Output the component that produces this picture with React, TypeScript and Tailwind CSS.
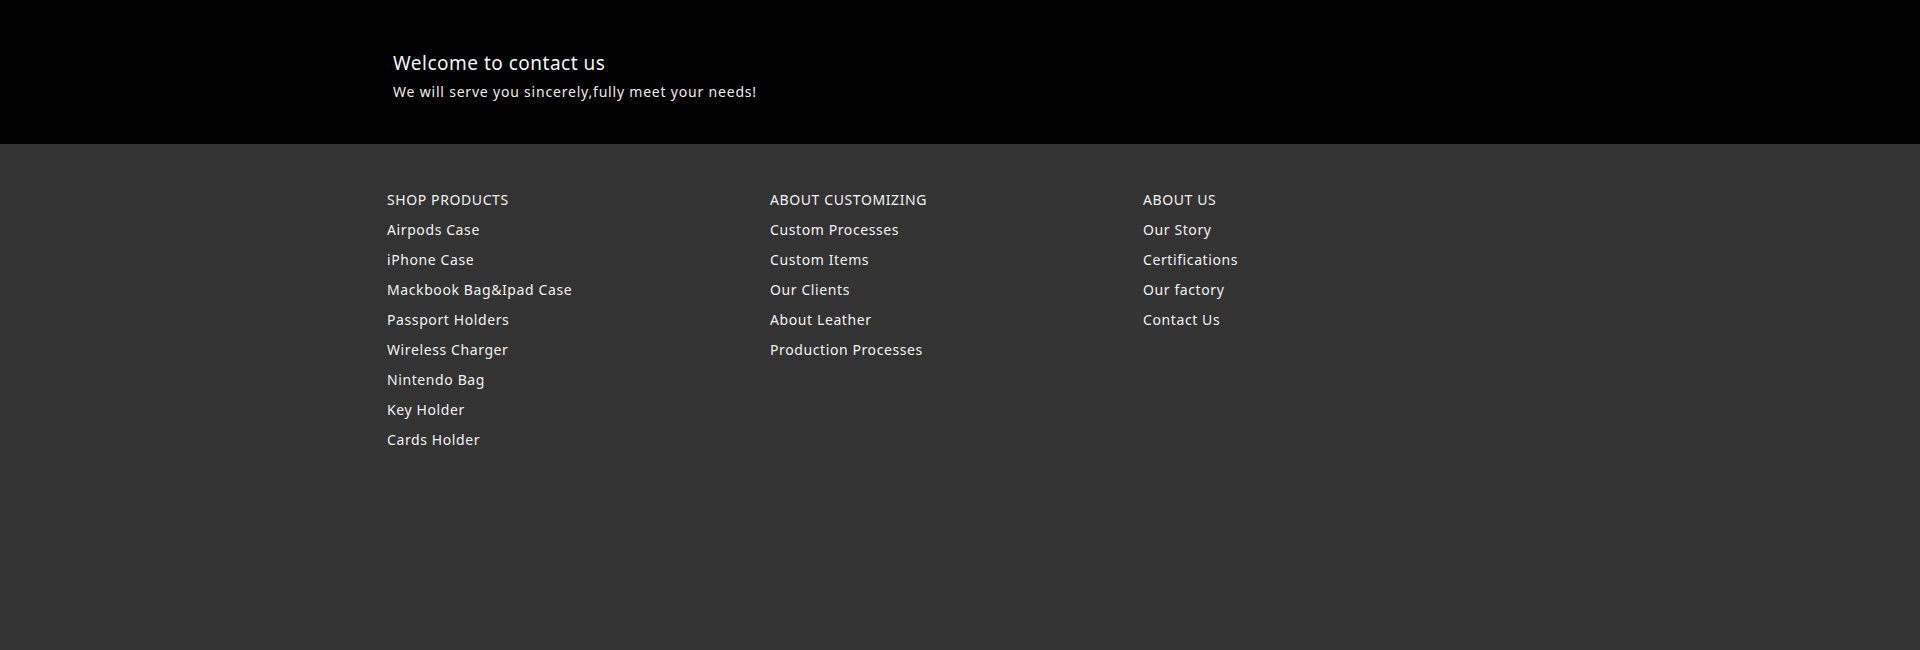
const shop = ['Airpods Case', 'iPhone Case', 'Mackbook Bag&Ipad Case', 'Passport Holders', 'Wireless Charger', 'Nintendo Bag', 'Key Holder', 'Cards Holder'];
const customizing = ['Custom Processes', 'Custom Items', 'Our Clients', 'About Leather', 'Production Processes'];
const about = ['Our Story', 'Certifications', 'Our factory', 'Contact Us'];

function Column({ title, items, width }: { title: string; items: string[]; width: string }) {
  return (
    <div className={width}>
      <h3 className="text-[14px] leading-[30px] tracking-[0.6px] text-[#f2f2f2] font-normal">{title}</h3>
      <ul>
        {items.map(i => (
          <li key={i} className="text-[14px] leading-[30px] tracking-[0.6px] text-[#f2f2f2]">
            <a href="#">{i}</a>
          </li>
        ))}
      </ul>
    </div>
  );
}

export default function App() {
  return (
    <div className="w-full h-[650px] bg-[#333333] font-['Noto_Sans','Open_Sans',sans-serif]">
      <div className="h-[144px] bg-black pl-[393px] pt-[49px]">
        <h2 className="text-[19px] leading-[28px] tracking-[0.5px] text-[#f5f5f5] font-normal">Welcome to contact us</h2>
        <p className="mt-[3px] text-[14px] leading-[24px] tracking-[0.8px] text-[#eeeeee]">We will serve you sincerely,fully meet your needs!</p>
      </div>
      <div className="flex pl-[387px] pt-[41px]">
        <Column title="SHOP PRODUCTS" items={shop} width="w-[383px]" />
        <Column title="ABOUT CUSTOMIZING" items={customizing} width="w-[373px]" />
        <Column title="ABOUT US" items={about} width="w-[300px]" />
      </div>
    </div>
  );
}
